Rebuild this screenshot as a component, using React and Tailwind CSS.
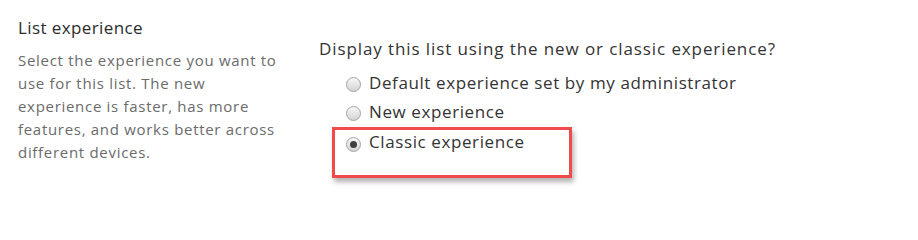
const options = [
  { label: 'Default experience set by my administrator', checked: false },
  { label: 'New experience', checked: false },
];

function Radio({ checked }) {
  return (
    <span className="mt-[4px] w-[15px] h-[15px] shrink-0 rounded-full border border-[#a3a3a3] bg-gradient-to-b from-[#f7f7f7] to-[#d4d4d4] flex items-center justify-center">
      {checked && <span className="w-[7px] h-[7px] rounded-full bg-[#404040]" />}
    </span>
  );
}

export default function App() {
  return (
    <div className="w-[918px] h-[207px] bg-white flex font-['Open_Sans',sans-serif]">
      {/* left: section title + help text */}
      <div className="w-[319px] shrink-0 pl-[18px] pt-[16px]">
        <h2 className="text-[17px] leading-[24px] tracking-[0.4px] text-[#2b2b2b]">List experience</h2>
        <p className="mt-[9px] w-[274px] text-[15px] leading-[23px] tracking-[0.7px] text-[#6b6b6b]">
          Select the experience you want to use for this list. The new experience is faster, has more features, and works better across different devices.
        </p>
      </div>

      {/* right: radio group */}
      <div className="pt-[37px]">
        <p className="text-[17px] leading-[24px] tracking-[0.9px] text-[#333]">
          Display this list using the new or classic experience?
        </p>
        <div className="mt-[7px] pl-[27px] flex flex-col">
          {options.map((o) => (
            <label key={o.label} className="h-[29px] flex items-center gap-[8px] text-[17px] tracking-[0.6px] text-[#333]">
              <Radio checked={o.checked} />
              {o.label}
            </label>
          ))}
          <div className="-ml-[14px] mt-[1px] w-[240px] h-[51px] border-[3px] border-[#f14a4a] shadow-[2px_4px_5px_rgba(0,0,0,0.3)] pl-[11px]">
            <label className="h-[24px] flex items-center gap-[8px] text-[17px] tracking-[0.6px] text-[#333]">
              <Radio checked />
              Classic experience
            </label>
          </div>
        </div>
      </div>
    </div>
  );
}
